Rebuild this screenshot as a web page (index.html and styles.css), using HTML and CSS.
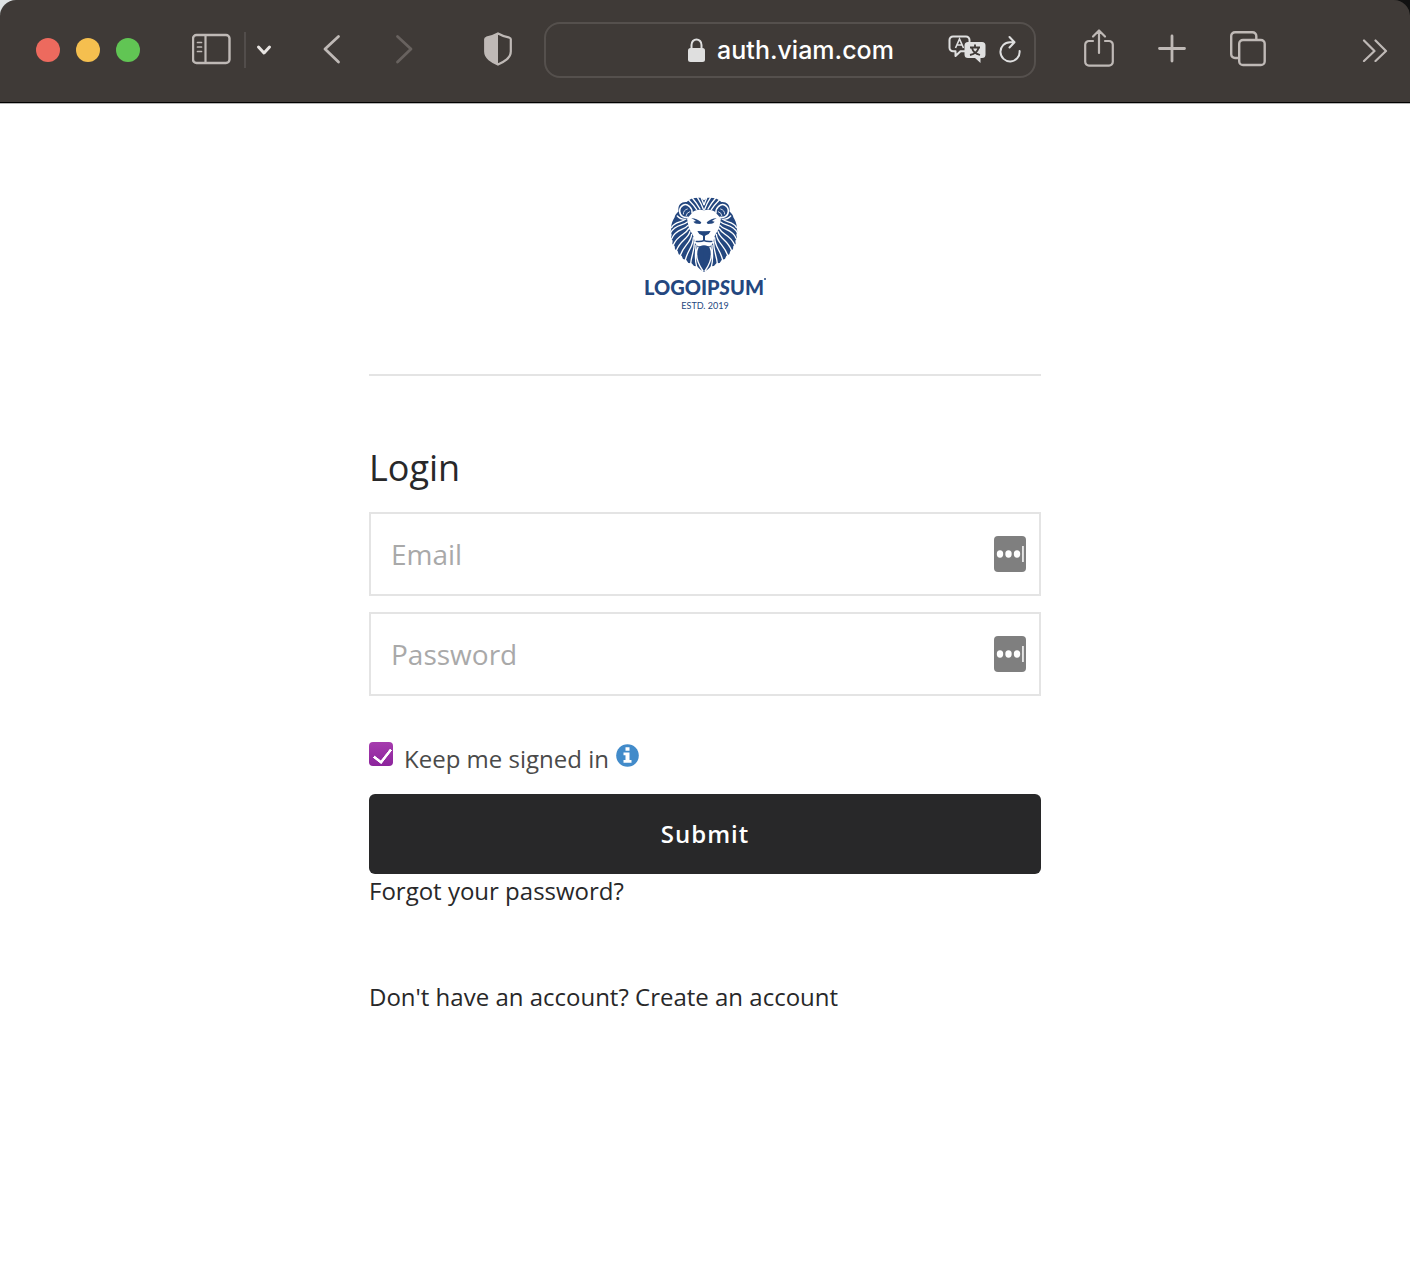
FILE: index.html
```html
<!DOCTYPE html>
<html lang="en">
<head>
<meta charset="utf-8">
<meta name="viewport" content="width=device-width, initial-scale=1">
<title>Login</title>
<link rel="stylesheet" href="styles.css">
</head>
<body>
<div class="window-top">
<header class="toolbar">
  <div class="lights">
    <button class="light light-close" aria-label="Close"></button>
    <button class="light light-min" aria-label="Minimize"></button>
    <button class="light light-max" aria-label="Zoom"></button>
  </div>
  <div class="sidebar-tools">
    <button class="tool" aria-label="Sidebar"><svg width="40" height="34" viewBox="0 0 40 34" fill="none" stroke="currentColor" stroke-linecap="round"><rect x="1" y="2" width="36.500" height="28" rx="3.500" stroke-width="2.400"/><path d="M13.500 2v28" stroke-width="2.200"/><path d="M5.500 9.500h4M5.500 14h4M5.500 18.500h4" stroke-width="1.700"/></svg></button>
    <span class="separator"></span>
    <button class="tool tool-bright" aria-label="Tab groups"><svg width="16" height="12" viewBox="0 0 16 12" fill="none" stroke="currentColor" stroke-width="3" stroke-linecap="round" stroke-linejoin="round"><path d="M2.500 3l5.500 6 5.500-6"/></svg></button>
  </div>
  <nav class="history">
    <button class="tool" aria-label="Back"><svg width="20" height="34" viewBox="0 0 20 34" fill="none" stroke="currentColor" stroke-width="2.800" stroke-linecap="round" stroke-linejoin="round"><path d="M16.500 3.500L3 16l13.500 13"/></svg></button>
    <button class="tool tool-dim" aria-label="Forward"><svg width="20" height="34" viewBox="0 0 20 34" fill="none" stroke="currentColor" stroke-width="2.800" stroke-linecap="round" stroke-linejoin="round"><path d="M3.500 3.500L17 16 3.500 29"/></svg></button>
  </nav>
  <button class="tool" aria-label="Privacy report"><svg width="28" height="36" viewBox="0 0 28 36"><path d="M14 1.500C10.500 3.500 6 5 2.500 5.700c-.8.200-1.300.8-1.300 1.600v12.200c0 6.500 6.500 10 12.800 13 6.300-3 12.800-6.500 12.800-13V7.300c0-.8-.5-1.400-1.300-1.600C22 5 17.500 3.500 14 1.500z" fill="none" stroke="currentColor" stroke-width="2.200"/><path d="M14 1.500C10.500 3.500 6 5 2.500 5.700c-.8.200-1.300.8-1.300 1.600v12.200c0 6.500 6.500 10 12.800 13z" fill="currentColor"/></svg></button>
  <div class="address">
    <span class="address-side"></span>
    <span class="address-text"><svg width="17" height="24" viewBox="0 0 17 24"><rect x="0" y="10" width="17" height="14" rx="2.500" fill="#dfdfdf"/><path d="M3.500 11V7a5 5.600 0 0 1 10 0v4" fill="none" stroke="#dfdfdf" stroke-width="2"/></svg>auth.viam.com</span>
    <span class="address-side address-actions">
      <button class="tool tool-address" aria-label="Translate"><svg width="38" height="30" viewBox="0 0 38 30"><path d="M17 16.200h-4.500L7.500 21v-4.800H5a3.500 3.500 0 0 1-3.500-3.500V5A3.500 3.500 0 0 1 5 1.500h13A3.500 3.500 0 0 1 21.500 5v1.500" fill="none" stroke="currentColor" stroke-width="2" stroke-linejoin="round" stroke-linecap="round"/><path d="M7.500 13l4-9 4 9M9 10h5" fill="none" stroke="currentColor" stroke-width="1.600"/><path d="M20 7h14a3.500 3.500 0 0 1 3.500 3.500v9A3.500 3.500 0 0 1 34 23h-1.500v5l-5.500-5h-7a3.500 3.500 0 0 1-3.500-3.500v-9A3.500 3.500 0 0 1 20 7z" fill="currentColor"/><path d="M27 9.500v2.500M22 12.500h10M24 13c1 4 4 6 8 7M30.500 13c-1 4-4 6-8.500 7" fill="none" stroke="#3f3a37" stroke-width="1.800"/></svg></button>
      <button class="tool tool-address" aria-label="Reload"><svg width="24" height="30" viewBox="0 0 24 30" fill="none" stroke="currentColor" stroke-width="2" stroke-linecap="round" stroke-linejoin="round"><path d="M15.500 7.200H12A9.600 9.600 0 1 0 21.600 16M11.500 2l5 5.200-5 5.300"/></svg></button>
    </span>
  </div>
  <div class="actions">
    <button class="tool" aria-label="Share"><svg width="30" height="44" viewBox="0 0 30 44" fill="none" stroke="currentColor" stroke-width="2.200" stroke-linecap="round" stroke-linejoin="round"><path d="M9 13H5a3.800 3.800 0 0 0-3.800 3.800v17A3.800 3.800 0 0 0 5 37.600h20a3.800 3.800 0 0 0 3.800-3.800v-17A3.800 3.800 0 0 0 25 13h-4M15 25V3M9 8.500L15 2.500l6 6"/></svg></button>
    <button class="tool" aria-label="New tab"><svg width="28" height="32" viewBox="0 0 28 32" fill="none" stroke="currentColor" stroke-width="2.800" stroke-linecap="round"><path d="M14 2v25M1.500 14.500h25"/></svg></button>
    <button class="tool" aria-label="Tab overview"><svg width="36" height="38" viewBox="0 0 36 38" fill="none" stroke="currentColor" stroke-width="2.400"><path d="M9 27H5a3.800 3.800 0 0 1-3.800-3.800V5A3.800 3.800 0 0 1 5 1.200h17.500A3.800 3.800 0 0 1 26.300 5v4"/><rect x="9.200" y="9" width="25.500" height="25" rx="3.800"/></svg></button>
  </div>
  <button class="tool" aria-label="More"><svg width="26" height="24" viewBox="0 0 26 24" fill="none" stroke="currentColor" stroke-width="2.200" stroke-linecap="round" stroke-linejoin="round"><path d="M2 2.500L12.500 13 2 23M13.500 2.500L24 13 13.500 23"/></svg></button>
</header>
</div>
<main class="page">
  <div class="logo">
    <svg class="lion" width="72" height="76" viewBox="25 21 216 228" aria-hidden="true">
      <defs>
        <path id="mane" fill="#24477f" d="M131 32L122 24C102 22 86 27 78 36C60 34 50 48 54 64C48 70 42 76 42 82C36 92 30 106 32 116L30 124L33 134L31 144L36 152L35 162L42 168L43 178L51 183L54 193L63 197L67 207L77 210L83 219L93 220L100 228L109 229L118 238L130 246L131 246Z"/>
        <g id="strands" fill="none" stroke="#fff" stroke-width="4" stroke-linecap="round">
          <path fill="#fff" stroke="none" d="M133 62C117 56 102 60 96 66C90 74 84 80 79 86C82 96 82 108 86 118C92 128 98 134 100 146C102 160 107 166 112 168C119 170 126 165 133 165Z"/>
          <path d="M128 58Q122 40 110 22M118 57Q110 42 95 24M108 59Q100 46 84 30M130 44L122 24"/>
          <path d="M82 82C72 84 58 80 57 64C57 46 74 38 86 49C93 56 95 62 94 68" stroke-width="4.500"/>
          <path d="M68 72Q68 60 80 57M76 78Q77 68 87 65" stroke-width="2.400"/>
          <path d="M50 78Q58 88 74 88C62 98 42 94 33 112M80 96C66 108 44 102 30 128M82 106C70 122 46 116 33 146M84 116C74 136 52 132 38 165M88 124C82 148 60 148 47 182M93 133C90 160 70 164 59 196M98 143C97 172 82 178 74 210M101 156C102 182 92 196 90 221M106 166C105 190 101 208 108 230M112 171C103 192 111 220 127 243"/>
        </g>
        <g id="features" fill="#24477f">
          <path d="M92 85Q106 84 122 97L119 102L110 101Q103 102 98 95L106 93Q100 88 92 85Z"/>
          <path fill="none" stroke="#24477f" stroke-width="4" d="M131 138V151Q122 156 105 154"/>
          <path d="M131 124L110 123Q113 132 124 136L131 141ZM131 175C123 175 116 177 115 183C112 200 118 224 131 240Z"/>
        </g>
      </defs>
      <use href="#mane"/><use href="#mane" transform="translate(260 0) scale(-1 1)"/>
      <use href="#strands"/><use href="#strands" transform="translate(260 0) scale(-1 1)"/>
      <use href="#features"/><use href="#features" transform="translate(260 0) scale(-1 1)"/>
    </svg>
    <div class="logo-name">LOGOIP<i>S</i>UM<span class="logo-dot"></span></div>
    <div class="logo-year">ESTD. 2019</div>
  </div>
  <form class="login">
    <h1 class="title">Login</h1>
    <div class="field">
      <input class="field-input" type="email" placeholder="Email" aria-label="Email">
      <svg class="filler" width="32" height="36" viewBox="0 0 32 36" aria-hidden="true"><rect width="32" height="36" rx="4" fill="#7f7f7f"/><g fill="#fff"><ellipse cx="6" cy="18" rx="3.200" ry="3.700"/><ellipse cx="14.500" cy="18" rx="3.200" ry="3.700"/><ellipse cx="23" cy="18" rx="3.200" ry="3.700"/><rect x="28.200" y="10" width="1.500" height="16"/></g></svg>
    </div>
    <div class="field">
      <input class="field-input" type="password" placeholder="Password" aria-label="Password">
      <svg class="filler" width="32" height="36" viewBox="0 0 32 36" aria-hidden="true"><rect width="32" height="36" rx="4" fill="#7f7f7f"/><g fill="#fff"><ellipse cx="6" cy="18" rx="3.200" ry="3.700"/><ellipse cx="14.500" cy="18" rx="3.200" ry="3.700"/><ellipse cx="23" cy="18" rx="3.200" ry="3.700"/><rect x="28.200" y="10" width="1.500" height="16"/></g></svg>
    </div>
    <div class="keep">
      <input class="keep-box" type="checkbox" id="keep" checked>
      <label class="keep-label" for="keep">Keep me signed in</label>
      <svg class="info" width="23" height="23" viewBox="0 0 23 23" aria-hidden="true"><circle cx="11.500" cy="11.500" r="11.300" fill="#428bca"/><path fill="#fff" d="M9.500 3.300h4v3.400h-4zM7.500 8.500h6v7.500h2v2.800h-8V16h2v-4.700h-2z"/></svg>
    </div>
    <button class="submit" type="submit">Submit</button>
    <a class="forgot" href="#">Forgot your password?</a>
    <p class="signup">Don't have an account? <a href="#">Create an account</a></p>
  </form>
</main>
</body>
</html>
```
FILE: styles.css
```css
* { box-sizing: border-box; }

body {
  margin: 0;
  background: #fff;
  color: #282829;
  font-family: "Open Sans", "Liberation Sans", sans-serif;
  font-size: 24px;
  line-height: 34px;
}

button {
  margin: 0;
  padding: 0;
  border: 0;
  background: none;
  font: inherit;
}

svg { display: block; flex: none; }
a { color: inherit; text-decoration: none; }

.window-top { background: linear-gradient(90deg, #dfe3e4 50%, #111 50%); }

.toolbar {
  display: flex;
  align-items: center;
  height: 104px;
  padding: 0 22px 4px 36px;
  background: #3f3a37;
  border-bottom: 1px solid #b5b5b5;
  box-shadow: inset 0 -1px #000;
  border-radius: 16px 16px 0 0;
}

.tool { color: #bfb9b6; }
.tool-bright { color: #e8e4e2; }
.tool-dim { color: #68625f; }
.tool-address { color: #dfdfdf; }

.lights { display: flex; gap: 16px; margin-right: 52px; }
.light { width: 24px; height: 24px; border-radius: 50%; }
.light-close { background: #ed6a5e; }
.light-min { background: #f5bf4f; }
.light-max { background: #61c554; }

.sidebar-tools { display: flex; align-items: center; gap: 12px; margin-right: 50px; }
.sidebar-tools .tool-bright { margin-left: -2px; }
.separator { width: 2px; height: 36px; background: #524d4b; }
.history { display: flex; gap: 52px; margin-right: 70px; }

.address {
  display: flex;
  flex: 1;
  align-items: center;
  height: 56px;
  margin: 0 48px 0 32px;
  padding: 0 12px 0 14px;
  border: 2px solid #55504d;
  border-radius: 16px;
}
.address-side { flex: 1; }
.address-actions { display: flex; justify-content: flex-end; gap: 12px; }
.address-text {
  display: flex;
  align-items: center;
  gap: 12px;
  color: #fff;
  font-family: Inter, "Liberation Sans", sans-serif;
  font-size: 25px;
  font-weight: 500;
}

.actions { display: flex; align-items: center; gap: 44px; margin-right: 96px; }

.page {
  width: 100%;
  max-width: 672px;
  margin: 0 auto;
}

.logo {
  display: flex;
  flex-direction: column;
  align-items: center;
  padding: 93px 0 60px;
  border-bottom: 2px solid #e4e4e4;
  color: #24477f;
  font-family: Lato, sans-serif;
}
.logo-name {
  display: flex;
  margin-top: 3px;
  font-size: 20px;
  font-weight: 900;
  line-height: 22px;
}
.logo-dot { width: 2px; height: 2px; margin-top: 2px; border-radius: 50%; background: #24477f; }
.logo-year { font-size: 9px; line-height: 16px; }

.login { display: flex; flex-direction: column; padding-top: 68px; }
.title { margin: 0 0 20px; font-size: 36px; font-weight: 400; line-height: 48px; }

.field {
  display: flex;
  align-items: center;
  height: 84px;
  margin-bottom: 16px;
  padding: 0 13px 0 20px;
  border: 2px solid #e4e4e4;
}
.field-input {
  flex: 1;
  min-width: 0;
  height: 100%;
  padding: 0;
  border: 0;
  outline: 0;
  background: none;
  color: inherit;
  font: inherit;
  font-size: 28px;
}
.field-input::placeholder { color: #a9a9a9; opacity: 1; }

.keep { display: flex; align-items: flex-start; margin: 30px 0 18px; }
.keep-box {
  appearance: none;
  width: 24px;
  height: 24px;
  margin: 0 11px 0 0;
  border-radius: 4px;
  background: linear-gradient(#a63cae, #8c249c);
  position: relative;
}
.keep-box:checked::after {
  content: "";
  position: absolute;
  left: 8px;
  top: 3px;
  width: 8px;
  height: 15px;
  border: solid #fff;
  border-width: 0 3px 3px 0;
  border-radius: 1px;
  transform: rotate(38deg);
}
.keep-label { margin-right: 7px; color: #4a4a4a; }
.info { margin-top: 2px; }

.submit {
  height: 80px;
  border-radius: 6px;
  background: #282829;
  color: #fff;
  font-weight: 600;
  letter-spacing: 1px;
}
.forgot { align-self: flex-start; }
.signup { margin: 72px 0 0; }
```
